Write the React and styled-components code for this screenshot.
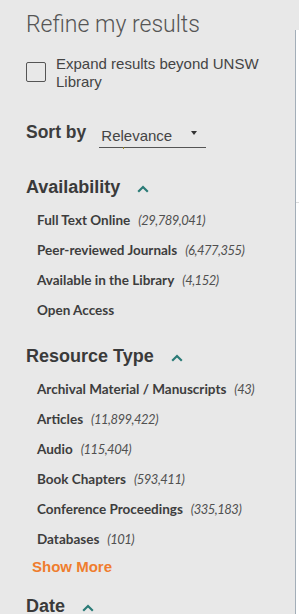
import React from 'react';
import styled, { createGlobalStyle } from 'styled-components';

const GlobalStyle = createGlobalStyle`
  html, body {
    margin: 0;
    padding: 0;
    height: 614px;
    overflow: hidden;
    background: #e8e8e8;
  }
  #root {
    height: 614px;
  }
`;

const Page = styled.div`
  display: flex;
  height: 614px;
  background: #e8e8e8;
  overflow: hidden;
`;

const Sidebar = styled.aside`
  flex: 0 0 295px;
  padding-left: 26px;
  box-sizing: border-box;
  overflow: hidden;
  color: #3d3d3d;
`;

const Main = styled.main`
  flex: 1;
  margin-top: 30px;
  background: #fff;
  border-left: 1px solid #a3aeb8;
  box-shadow: -8px 0 12px -4px rgba(0, 0, 0, 0.08);
`;

const MainHead = styled.div`
  height: 172px;
  border-bottom: 1px solid #dcdcdc;
`;

const Title = styled.h2`
  margin: 0;
  padding-top: 12px;
  font-family: Roboto, 'Liberation Sans', sans-serif;
  font-weight: 300;
  font-size: 23px;
  line-height: 26px;
  color: #555;
`;

const CheckRow = styled.label`
  display: flex;
  align-items: flex-start;
  margin-top: 17px;
`;

const Box = styled.span`
  flex: 0 0 auto;
  width: 20px;
  height: 20px;
  margin-top: 7px;
  box-sizing: border-box;
  border: 1.5px solid #555;
  border-radius: 2px;
`;

const CheckText = styled.span`
  margin-left: 10px;
  padding-right: 12px;
  font-family: 'Liberation Sans', Arial, sans-serif;
  font-size: 15px;
  line-height: 18px;
  color: #444;
`;

const SortRow = styled.div`
  display: flex;
  align-items: flex-start;
  margin-top: 30px;
`;

const SortLabel = styled.span`
  font-family: 'Liberation Sans', Arial, sans-serif;
  font-weight: 700;
  font-size: 17.5px;
  line-height: 22px;
  color: #3d3d3d;
`;

const Select = styled.div`
  position: relative;
  display: flex;
  align-items: center;
  justify-content: space-between;
  width: 107px;
  height: 27px;
  margin-left: 13px;
  padding: 4px 9px 0 2px;
  box-sizing: border-box;
  border-bottom: 1px solid #555;
  font-family: 'Liberation Sans', Arial, sans-serif;
  font-size: 15px;
  line-height: 18px;
  color: #444;
`;

const Caret = styled.span`
  width: 0;
  height: 0;
  margin-top: -6px;
  border-left: 3.5px solid transparent;
  border-right: 3.5px solid transparent;
  border-top: 4px solid #333;
`;

const Dot = styled.span`
  position: absolute;
  left: 24px;
  bottom: -2px;
  width: 1px;
  height: 2px;
  background: #a08a20;
`;

const Section = styled.section`
  margin-top: ${p => p.$gap}px;
`;

const Heading = styled.h3`
  display: flex;
  align-items: center;
  margin: 0;
  font-family: 'Liberation Sans', Arial, sans-serif;
  font-weight: 700;
  font-size: 18px;
  line-height: 22px;
  color: #3a3a3a;
  svg {
    margin-left: 17px;
    margin-top: 4px;
  }
`;

const List = styled.ul`
  list-style: none;
  margin: 7px 0 0;
  padding: 0 0 0 11px;
`;

const Item = styled.li`
  height: 30px;
  font-family: Lato, 'Noto Sans', sans-serif;
  font-weight: 700;
  font-size: 13.5px;
  line-height: 30px;
  color: #3d3d3d;
  white-space: nowrap;
`;

const Count = styled.span`
  margin-left: 8px;
  font-weight: 400;
  font-style: italic;
  font-size: 13px;
  letter-spacing: -0.5px;
  color: #505050;
`;

const ShowMore = styled.a`
  display: block;
  margin: 3px 0 0 6px;
  font-family: 'Liberation Sans', Arial, sans-serif;
  font-weight: 700;
  font-size: 15px;
  line-height: 20px;
  color: #ef7d2e;
`;

const Chevron = () => (
  <svg width="12" height="8" viewBox="0 0 12 8" fill="none">
    <path d="M1.2 6.8 L6 2 L10.8 6.8" stroke="#2b7b77" strokeWidth="2.2" />
  </svg>
);

const availability = [
  ['Full Text Online', '29,789,041'],
  ['Peer-reviewed Journals', '6,477,355'],
  ['Available in the Library', '4,152'],
  ['Open Access', null],
];

const resourceTypes = [
  ['Archival Material / Manuscripts', '43'],
  ['Articles', '11,899,422'],
  ['Audio', '115,404'],
  ['Book Chapters', '593,411'],
  ['Conference Proceedings', '335,183'],
  ['Databases', '101'],
];

const Facet = ({ items }) => (
  <List>
    {items.map(([label, count]) => (
      <Item key={label}>
        {label}
        {count && <Count>({count})</Count>}
      </Item>
    ))}
  </List>
);

export default function App() {
  return (
    <>
      <GlobalStyle />
      <Page>
        <Sidebar>
          <Title>Refine my results</Title>
          <CheckRow>
            <Box />
            <CheckText>Expand results beyond UNSW Library</CheckText>
          </CheckRow>
          <SortRow>
            <SortLabel>Sort by</SortLabel>
            <Select>
              Relevance
              <Caret />
              <Dot />
            </Select>
          </SortRow>
          <Section $gap={28}>
            <Heading>
              Availability <Chevron />
            </Heading>
            <Facet items={availability} />
          </Section>
          <Section $gap={20}>
            <Heading>
              Resource Type <Chevron />
            </Heading>
            <Facet items={resourceTypes} />
            <ShowMore>Show More</ShowMore>
          </Section>
          <Section $gap={18}>
            <Heading>
              Date <Chevron />
            </Heading>
          </Section>
        </Sidebar>
        <Main>
          <MainHead />
        </Main>
      </Page>
    </>
  );
}
